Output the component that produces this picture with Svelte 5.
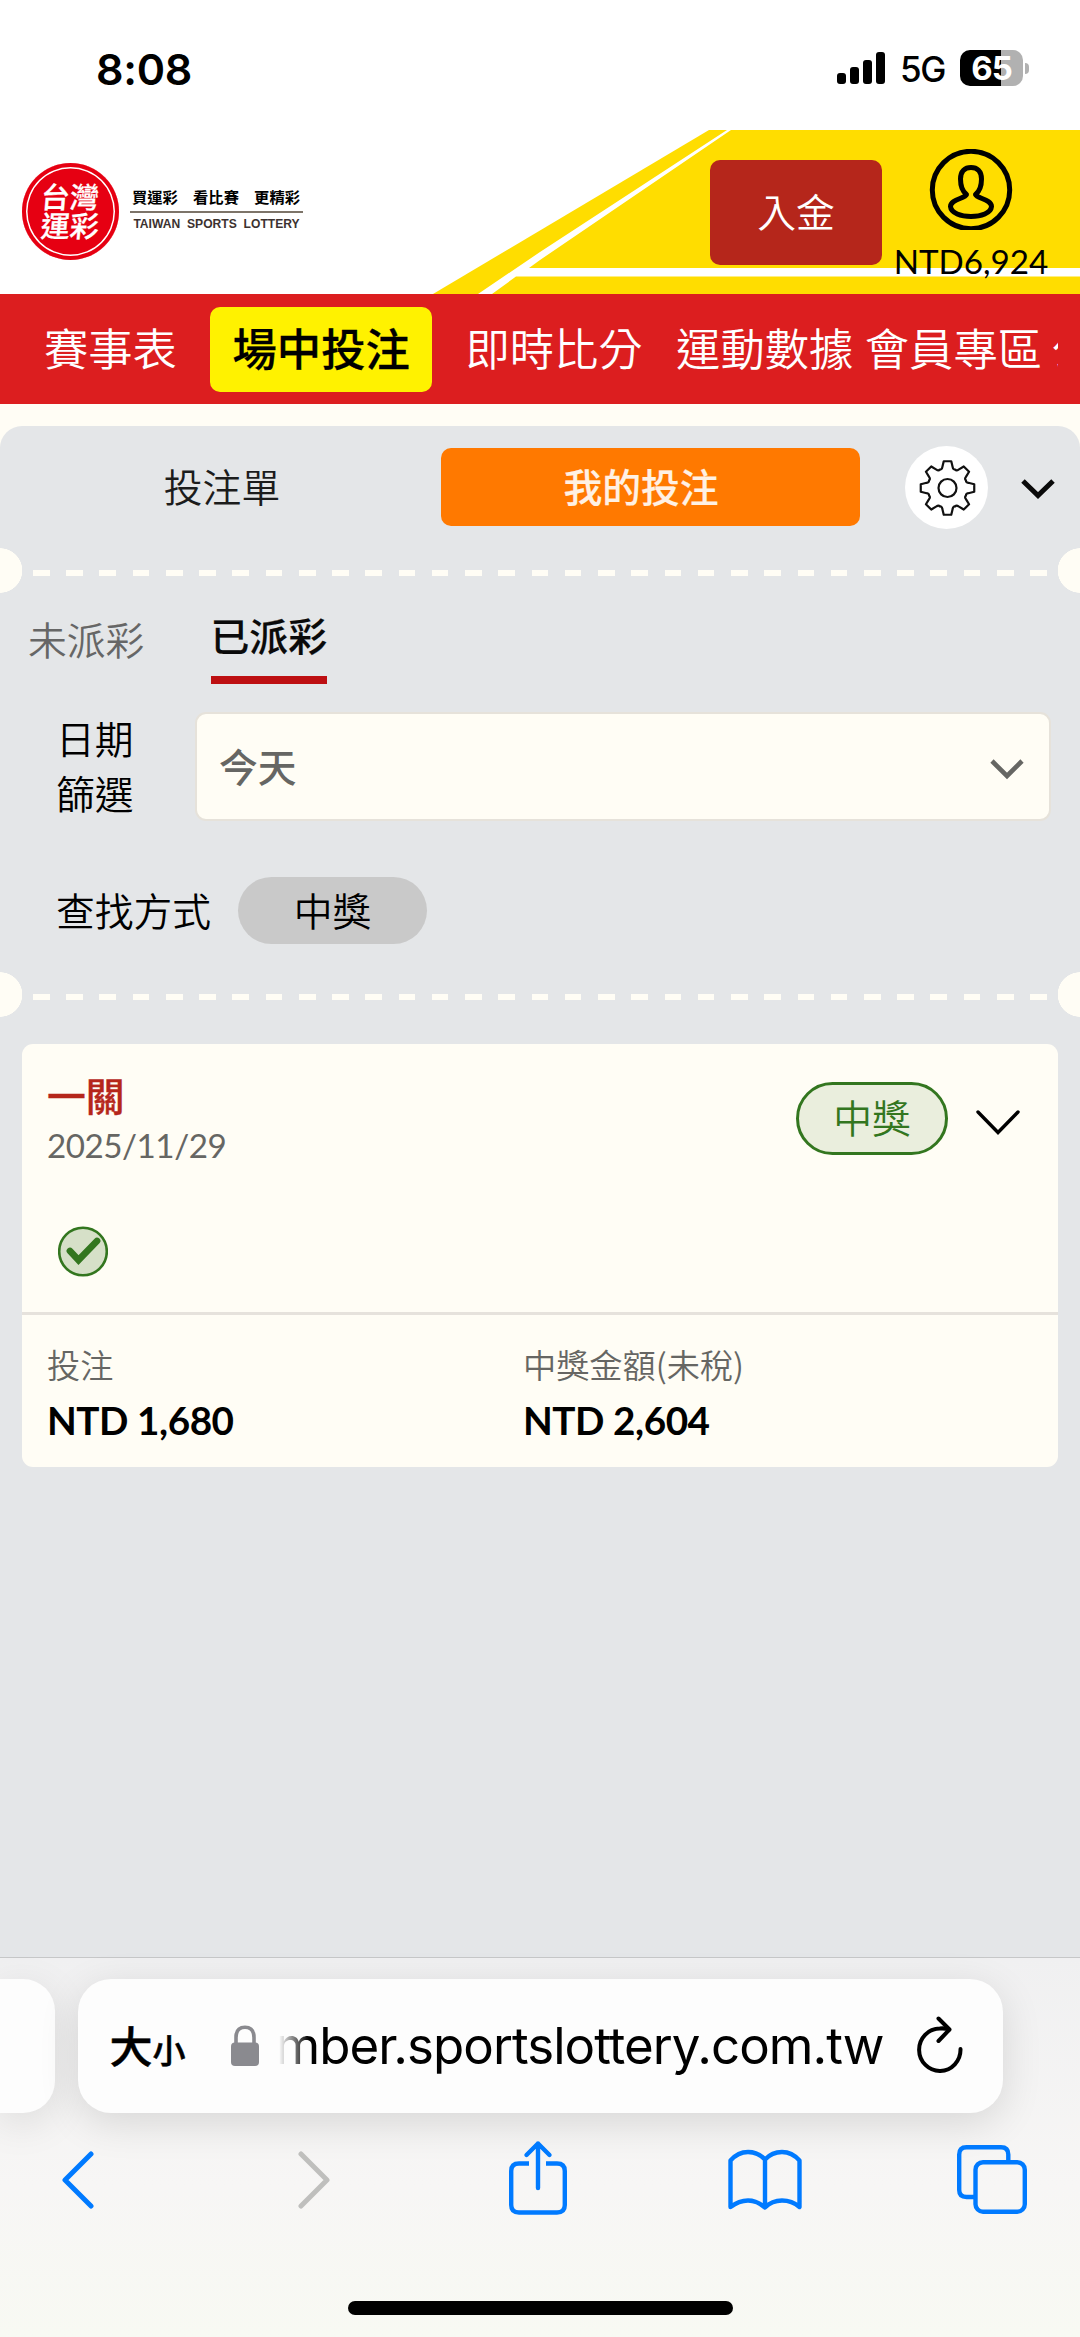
<script>
  const menu = ['賽事表', '場中投注', '即時比分', '運動數據', '會員專區', '公益'];
  let activeMenu = '場中投注';
  let activeTab = 'mine';
  let filter = '今天';

  const bet = {
    title: '一關',
    date: '2025/11/29',
    status: '中獎',
    stake: 'NTD 1,680',
    payout: 'NTD 2,604'
  };

  const signalBars = [11, 17, 24, 32];

  // outline of the eight-tooth settings cog
  function cogPath(cx, cy) {
    const at = (deg, r) => {
      const a = (deg * Math.PI) / 180;
      return `${(cx + r * Math.cos(a)).toFixed(2)} ${(cy + r * Math.sin(a)).toFixed(2)}`;
    };
    let d = '';
    for (let i = 0; i < 8; i++) {
      const a = i * 45 - 90;
      d += `${i ? 'L' : 'M'}${at(a - 8, 27)}L${at(a + 8, 27)}L${at(a + 14, 21.5)}Q${at(a + 17, 19)} ${at(a + 22.5, 20)}Q${at(a + 28, 19)} ${at(a + 31, 21.5)}`;
    }
    return d + 'Z';
  }
</script>

<div class="screen">
  <div class="status">
    <span class="time">8:08</span>
    <div class="status-right">
      <div class="signal">
        {#each signalBars as h}
          <i style="height: {h}px"></i>
        {/each}
      </div>
      <span class="network">5G</span>
      <div class="battery"><span>65</span></div>
      <i class="nub"></i>
    </div>
  </div>

  <header>
    <svg class="header-bg" width="1080" height="164" viewBox="0 0 1080 164">
      <path d="M709 0H1080V164H433Z" fill="#ffdd00" />
      <path d="M727 0H731L540 130L529 138H1080V146.500H516L492 164H478L540 122Z" fill="#fff" />
    </svg>
    <div class="logo">
      <div class="seal">
        <span>台灣</span>
        <span>運彩</span>
      </div>
      <div class="slogan">
        <div class="slogan-zh"><span>買運彩</span><span>看比賽</span><span>更精彩</span></div>
        <div class="slogan-en">TAIWAN SPORTS LOTTERY</div>
      </div>
    </div>
    <button class="deposit">入金</button>
    <div class="account">
      <svg width="84" height="81" viewBox="0 0 84 81" fill="none" stroke="#000">
        <circle cx="42" cy="41" r="38.700" stroke-width="5" />
        <path d="M37.500 45.500C33 42 31.500 36 31.500 30C31.500 22 36 18.500 42 18.500S52.500 22 52.500 30C52.500 36 51 42 46.500 45.500C48 49.500 62.500 50.500 62.500 57.500C62 64 52 67.500 42 67.500S22 64 21.500 57.500C21.500 50.500 36 49.500 37.500 45.500Z" stroke-width="5" stroke-linejoin="round" />
      </svg>
      <span>NTD6,924</span>
    </div>
  </header>

  <nav>
    <div class="menu">
      {#each menu as item}
        <button class:active={item === activeMenu} on:click={() => (activeMenu = item)}>{item}</button>
      {/each}
    </div>
  </nav>

  <main>
    <div class="slip-tabs">
      <button class:active={activeTab === 'slip'} on:click={() => (activeTab = 'slip')}>投注單</button>
      <button class:active={activeTab === 'mine'} on:click={() => (activeTab = 'mine')}>我的投注</button>
      <div class="gear">
        <svg width="84" height="84" viewBox="0 0 84 84" fill="none" stroke="#111" stroke-width="2.200" stroke-linejoin="round">
          <path d={cogPath(42.5, 42)} />
          <circle cx="42.500" cy="42" r="9" />
        </svg>
      </div>
      <svg class="collapse" width="34" height="22" viewBox="0 0 34 22" fill="none" stroke="#0a0a0a" stroke-width="5">
        <path d="M2 3L17 17.500L32 3" />
      </svg>
    </div>

    <div class="divider"><i></i></div>

    <div class="result-tabs">
      <span>未派彩</span>
      <span class="active">已派彩</span>
    </div>

    <div class="date-row">
      <label for="date">日期<br />篩選</label>
      <button id="date" class="select">
        {filter}
        <svg width="34" height="22" viewBox="0 0 34 22" fill="none" stroke="#666663" stroke-width="4.600">
          <path d="M2 3L17 18L32 3" />
        </svg>
      </button>
    </div>

    <div class="find-row">
      <span>查找方式</span>
      <button>中獎</button>
    </div>

    <div class="divider"><i></i></div>

    <article>
      <div class="bet-head">
        <div class="bet-title">
          <h3>{bet.title}</h3>
          <time>{bet.date}</time>
        </div>
        <span class="badge">{bet.status}</span>
        <svg width="44" height="28" viewBox="0 0 44 28" fill="none" stroke="#000" stroke-width="3.400" stroke-linecap="round">
          <path d="M2 3L22 23.500L42 3" />
        </svg>
      </div>
      <svg class="won" width="50" height="51" viewBox="0 0 50 51">
        <circle cx="25" cy="25.500" r="23.800" fill="#d6e0c8" stroke="#33761f" stroke-width="2.600" />
        <path d="M12 25L20.500 34L39 15" fill="none" stroke="#33761f" stroke-width="6.800" stroke-linecap="round" />
      </svg>
      <div class="amounts">
        <div>
          <span>投注</span>
          <strong>{bet.stake}</strong>
        </div>
        <div>
          <span>中獎金額(未稅)</span>
          <strong>{bet.payout}</strong>
        </div>
      </div>
    </article>
  </main>

  <footer>
    <div class="address-row">
      <div class="prev-tab"></div>
      <div class="address">
        <span class="aa">大<small>小</small></span>
        <svg class="lock" width="28" height="42" viewBox="0 0 28 42">
          <path d="M5 20V12.500C5 5.500 8.500 2.200 14 2.200S23 5.500 23 12.500V20" fill="none" stroke="#8a8a8f" stroke-width="3.600" />
          <rect y="17.500" width="28" height="23.500" rx="4" fill="#8a8a8f" />
        </svg>
        <div class="url"><span>mber.sportslottery.com.tw</span></div>
        <svg class="reload" width="50" height="60" viewBox="0 0 50 60" fill="none" stroke="#000" stroke-width="4" stroke-linecap="round" stroke-linejoin="round">
          <path d="M45.500 36A20.700 21.200 0 1 1 24.800 15.500Q30 15 34 16.500" />
          <path d="M23.500 5.500L34.500 16.500L23.500 28" />
        </svg>
      </div>
    </div>
    <div class="toolbar">
      <svg width="32" height="60" viewBox="0 0 32 60" fill="none" stroke="#007aff" stroke-width="5" stroke-linecap="round" stroke-linejoin="round">
        <path d="M29 4L3 30L29 56" />
      </svg>
      <svg class="forward" width="32" height="60" viewBox="0 0 32 60" fill="none" stroke="#bfbfbd" stroke-width="5" stroke-linecap="round" stroke-linejoin="round">
        <path d="M3 4L29 30L3 56" />
      </svg>
      <svg class="share" width="58" height="76" viewBox="0 0 58 76" fill="none" stroke="#007aff" stroke-width="4.400">
        <path d="M20 23.500H10Q2.200 23.500 2.200 31V65Q2.200 72.500 10 72.500H48Q55.800 72.500 55.800 65V31Q55.800 23.500 48 23.500H37" />
        <path d="M29 48V3.500M17.500 15L29 3.500L40.500 15" stroke-linecap="round" stroke-linejoin="round" />
      </svg>
      <svg class="bookmarks" width="74" height="62" viewBox="0 0 74 62" fill="none" stroke="#007aff" stroke-width="4.400" stroke-linejoin="round">
        <path d="M37 10.500Q30 3 20 3T2.500 11.500V58Q11 51.500 20 51.500T37 58.500Q44 51.500 54 51.500T71.500 58V11.500Q64 3 54 3T37 10.500V58.500" />
      </svg>
      <svg class="tabs" width="70" height="70" viewBox="0 0 70 70" fill="none" stroke="#007aff" stroke-width="4.400">
        <path d="M51.300 17V9.500Q51.300 2.200 44 2.200H9.500Q2.200 2.200 2.200 9.500V45Q2.200 52 9.500 52H17" />
        <rect x="18.500" y="17.200" width="49.300" height="49.500" rx="7.500" />
      </svg>
    </div>
    <div class="home"></div>
  </footer>
</div>

<style>
  :global(body) {
    margin: 0;
  }

  * {
    box-sizing: border-box;
  }

  .screen {
    width: 1080px;
    height: 2337px;
    overflow: hidden;
    display: flex;
    flex-direction: column;
    background: #fffdf5;
    color: #000;
    font-family: Lato, 'Noto Sans CJK TC', sans-serif;
    font-size: 38.770px;
    font-weight: 350;
  }

  svg {
    display: block;
    flex: none;
  }

  button {
    border: 0;
    padding: 0;
    background: none;
    color: inherit;
    font: inherit;
    white-space: nowrap;
  }

  .status {
    height: 130px;
    background: #fff;
    display: flex;
    justify-content: space-between;
    padding: 0 51px 0 96px;
    font-family: Inter, sans-serif;
  }

  .time {
    font-size: 43px;
    font-weight: 600;
    line-height: 52px;
    margin-top: 43px;
    letter-spacing: -0.3px;
  }

  .status-right {
    display: flex;
    align-items: center;
    height: 36px;
    margin-top: 50px;
  }

  .signal {
    display: flex;
    align-items: flex-end;
    gap: 4.500px;
    height: 32px;
  }

  .signal i {
    width: 8.600px;
    border-radius: 3px;
    background: #000;
  }

  .network {
    width: 75px;
    text-align: center;
    font-size: 35px;
    font-weight: 450;
    letter-spacing: -1.500px;
    padding-top: 2px;
  }

  .battery {
    width: 63px;
    height: 36px;
    border-radius: 10px;
    background: linear-gradient(90deg, #000 41px, #b1b1b1 41px);
    color: #fff;
    font-size: 33px;
    font-weight: 700;
    line-height: 36px;
    text-align: center;
    letter-spacing: -1px;
  }

  .nub {
    width: 4px;
    height: 11px;
    margin-left: 2px;
    border-radius: 0 5px 5px 0;
    background: #b1b1b1;
  }

  header {
    position: relative;
    height: 163.500px;
    display: flex;
    background: #fff;
  }

  .header-bg {
    position: absolute;
    inset: 0;
  }

  .logo {
    display: flex;
    width: 710px;
    padding: 33px 0 0 22px;
    position: relative;
  }

  .seal {
    width: 97px;
    height: 97px;
    border-radius: 50%;
    background: #e60012;
    box-shadow: inset 0 0 0 4px #e60012, inset 0 0 0 5.500px #fff;
    display: flex;
    flex-direction: column;
    align-items: center;
    justify-content: center;
    color: #fff;
    font-size: 29px;
    font-weight: 500;
    -webkit-text-stroke: 0.3px;
    line-height: 29px;
  }

  .seal span {
    transform: skewX(-5deg) translateY(-1px);
  }

  .slogan {
    width: 173px;
    margin: 24px 0 0 11px;
  }

  .slogan-zh {
    display: flex;
    justify-content: space-between;
    padding: 0 3px 0 2px;
    height: 25.500px;
    border-bottom: 2px solid #7d7469;
    font-size: 15.300px;
    font-weight: 700;
    line-height: 21px;
  }

  .slogan-en {
    margin-top: 3px;
    text-align: center;
    font: bold 12.100px/16px 'Liberation Sans', sans-serif;
    color: #3c3230;
    word-spacing: 3.500px;
    white-space: nowrap;
  }

  .deposit {
    position: relative;
    width: 172px;
    height: 105.500px;
    margin-top: 29.500px;
    padding-bottom: 4px;
    border-radius: 10px;
    background: #b5261b;
    color: #fff;
  }

  .account {
    position: relative;
    width: 178px;
    padding-top: 19px;
    display: flex;
    flex-direction: column;
    align-items: center;
    font-size: 33.200px;
    font-weight: 400;
    line-height: 40px;
  }

  .account span {
    margin-top: 11px;
  }

  nav {
    height: 110.500px;
    padding: 13px 22px;
    background: #dc1e1f;
    color: #fff;
    font-size: 44.300px;
  }

  .menu {
    display: flex;
    overflow: hidden;
  }

  .menu button {
    flex: none;
    height: 85px;
    padding-bottom: 2px;
    margin-right: 11.500px;
    line-height: 81px;
  }

  .menu button:nth-child(1),
  .menu button:nth-child(3) {
    padding: 0 22px 2px;
  }

  .menu button:last-child {
    margin-left: -2px;
  }

  .menu button.active {
    width: 221.500px;
    border-radius: 10px;
    background: #fff200;
    color: #000;
    font-weight: 500;
    -webkit-text-stroke: 0.3px;
  }

  main {
    height: 1531px;
    margin-top: 22px;
    border-radius: 22px 22px 0 0;
    background: #e4e6e8;
  }

  .slip-tabs {
    height: 122px;
    display: flex;
    align-items: center;
    padding-left: 22px;
  }

  .slip-tabs button {
    width: 419px;
    height: 77.500px;
    padding: 0 19px 4px 0;
    border-radius: 10px;
    color: #1c1c1c;
  }

  .slip-tabs button.active {
    background: #ff7900;
    color: #fff1e4;
    font-weight: 500;
    -webkit-text-stroke: 0.2px;
  }

  .gear {
    width: 83px;
    height: 83px;
    margin-left: 45px;
    border-radius: 50%;
    background: #fff;
  }

  .collapse {
    margin: 4px 0 0 33px;
  }

  .divider {
    height: 45px;
    padding: 22px 33px 0;
    background:
      radial-gradient(circle at 0 50%, #fffdf5 22px, transparent 22.500px),
      radial-gradient(circle at 100% 50%, #fffdf5 22px, transparent 22.500px);
  }

  .divider i {
    display: block;
    height: 6px;
    background: repeating-linear-gradient(90deg, #fffdf5 0 16.600px, transparent 16.600px 33.240px);
  }

  .result-tabs {
    display: flex;
    height: 91px;
    padding-left: 28px;
    color: #666;
    line-height: 58px;
  }

  .result-tabs span {
    width: 116.500px;
    margin: 18px 66px 0 0;
  }

  .result-tabs .active {
    margin-top: 14px;
    height: 77px;
    border-bottom: 8.500px solid #bd0f12;
    color: #0a0a0a;
    font-weight: 500;
    -webkit-text-stroke: 0.2px;
    text-align: center;
  }

  .date-row {
    display: flex;
    height: 165px;
    padding: 28px 29px 0 56px;
  }

  .date-row label {
    width: 139px;
    line-height: 55.400px;
  }

  .select {
    flex: 1;
    height: 109px;
    display: flex;
    align-items: center;
    justify-content: space-between;
    padding: 0 25px 3px 22px;
    border: 2px solid #e6e2da;
    border-radius: 11px;
    background: #fffdf5;
    color: #666663;
    font-weight: 500;
  }

  .select svg {
    margin-top: 7px;
  }

  .find-row {
    display: flex;
    align-items: center;
    gap: 27px;
    height: 123px;
    padding: 0 56px;
  }

  .find-row span {
    margin-top: -4px;
  }

  .find-row button {
    width: 189px;
    height: 66.500px;
    padding-bottom: 4px;
    border-radius: 34px;
    background: #c9c9c9;
  }

  article {
    height: 423px;
    margin: 27px 22px 0;
    border-radius: 11px;
    background: #fffdf5;
    display: flex;
    flex-direction: column;
  }

  .bet-head {
    display: flex;
    align-items: flex-start;
    height: 183px;
    flex: none;
    padding: 25px 38px 0 25px;
  }

  .bet-title {
    flex: 1;
  }

  h3 {
    margin: 0;
    color: #b5261b;
    font-size: 38.770px;
    font-weight: 500;
    -webkit-text-stroke: 0.4px;
    line-height: 54px;
  }

  time {
    display: block;
    color: #666663;
    font-size: 33.200px;
    font-weight: 400;
    line-height: 44px;
    letter-spacing: -0.480px;
  }

  .badge {
    width: 152px;
    height: 73px;
    margin: 12.500px 28px 0 0;
    border: 3px solid #33761f;
    border-radius: 37px;
    background: #eaeedd;
    color: #33761f;
    line-height: 67px;
    text-align: center;
  }

  .bet-head svg {
    margin-top: 40px;
  }

  .won {
    margin: -1px 0 35px 36px;
  }

  .amounts {
    flex: none;
    height: 155px;
    display: grid;
    grid-template-columns: 476px 1fr;
    padding: 25px 25px 0;
    border-top: 3px solid #e6e2dc;
  }

  .amounts span {
    display: block;
    color: #666663;
    font-family: 'Noto Sans CJK TC', sans-serif;
    font-size: 33.200px;
    line-height: 48px;
  }

  .amounts strong {
    display: block;
    font-size: 38.700px;
    line-height: 58px;
    margin-top: 3px;
    letter-spacing: -0.450px;
  }

  footer {
    height: 380px;
    display: flex;
    flex-direction: column;
    border-top: 1px solid #c6c7c8;
    background: linear-gradient(#f0f0f1, #f7f6f5 60%, #f8f9f3);
  }

  .address-row {
    display: flex;
    gap: 22.500px;
    padding-top: 21px;
  }

  .prev-tab {
    width: 55px;
    height: 134px;
    border-radius: 0 32px 32px 0;
    background: #fdfdfd;
    box-shadow: 0 10px 40px rgba(0, 0, 0, 0.1);
  }

  .address {
    width: 925px;
    height: 134px;
    display: flex;
    align-items: center;
    padding-left: 32px;
    border-radius: 33px;
    background: #fdfdfd;
    box-shadow: 0 10px 40px rgba(0, 0, 0, 0.12);
  }

  .aa {
    width: 121px;
    margin-top: -5px;
    font-size: 43px;
    font-weight: 500;
    -webkit-text-stroke: 0.5px;
    white-space: nowrap;
  }

  .aa small {
    font-size: 33px;
  }

  .url {
    width: 622px;
    margin-left: 20px;
    display: flex;
    justify-content: flex-end;
    overflow: hidden;
    padding-right: 17px;
    font: 400 51px/70px Inter, sans-serif;
    font-feature-settings: 'calt' 0;
    letter-spacing: -0.950px;
    white-space: nowrap;
    mask-image: linear-gradient(90deg, transparent, #000 30px);
  }

  .reload {
    margin: -7px 0 0 14px;
  }

  .toolbar {
    display: flex;
    align-items: center;
    height: 80px;
    margin-top: 27px;
    padding-left: 62px;
  }

  .forward {
    margin-left: 204px;
  }

  .share {
    margin: -4px 0 0 179px;
  }

  .bookmarks {
    margin-left: 161px;
  }

  .tabs {
    margin-left: 155px;
  }

  .home {
    width: 385px;
    height: 14px;
    margin: 81px auto 0;
    border-radius: 7px;
    background: #000;
  }
</style>
